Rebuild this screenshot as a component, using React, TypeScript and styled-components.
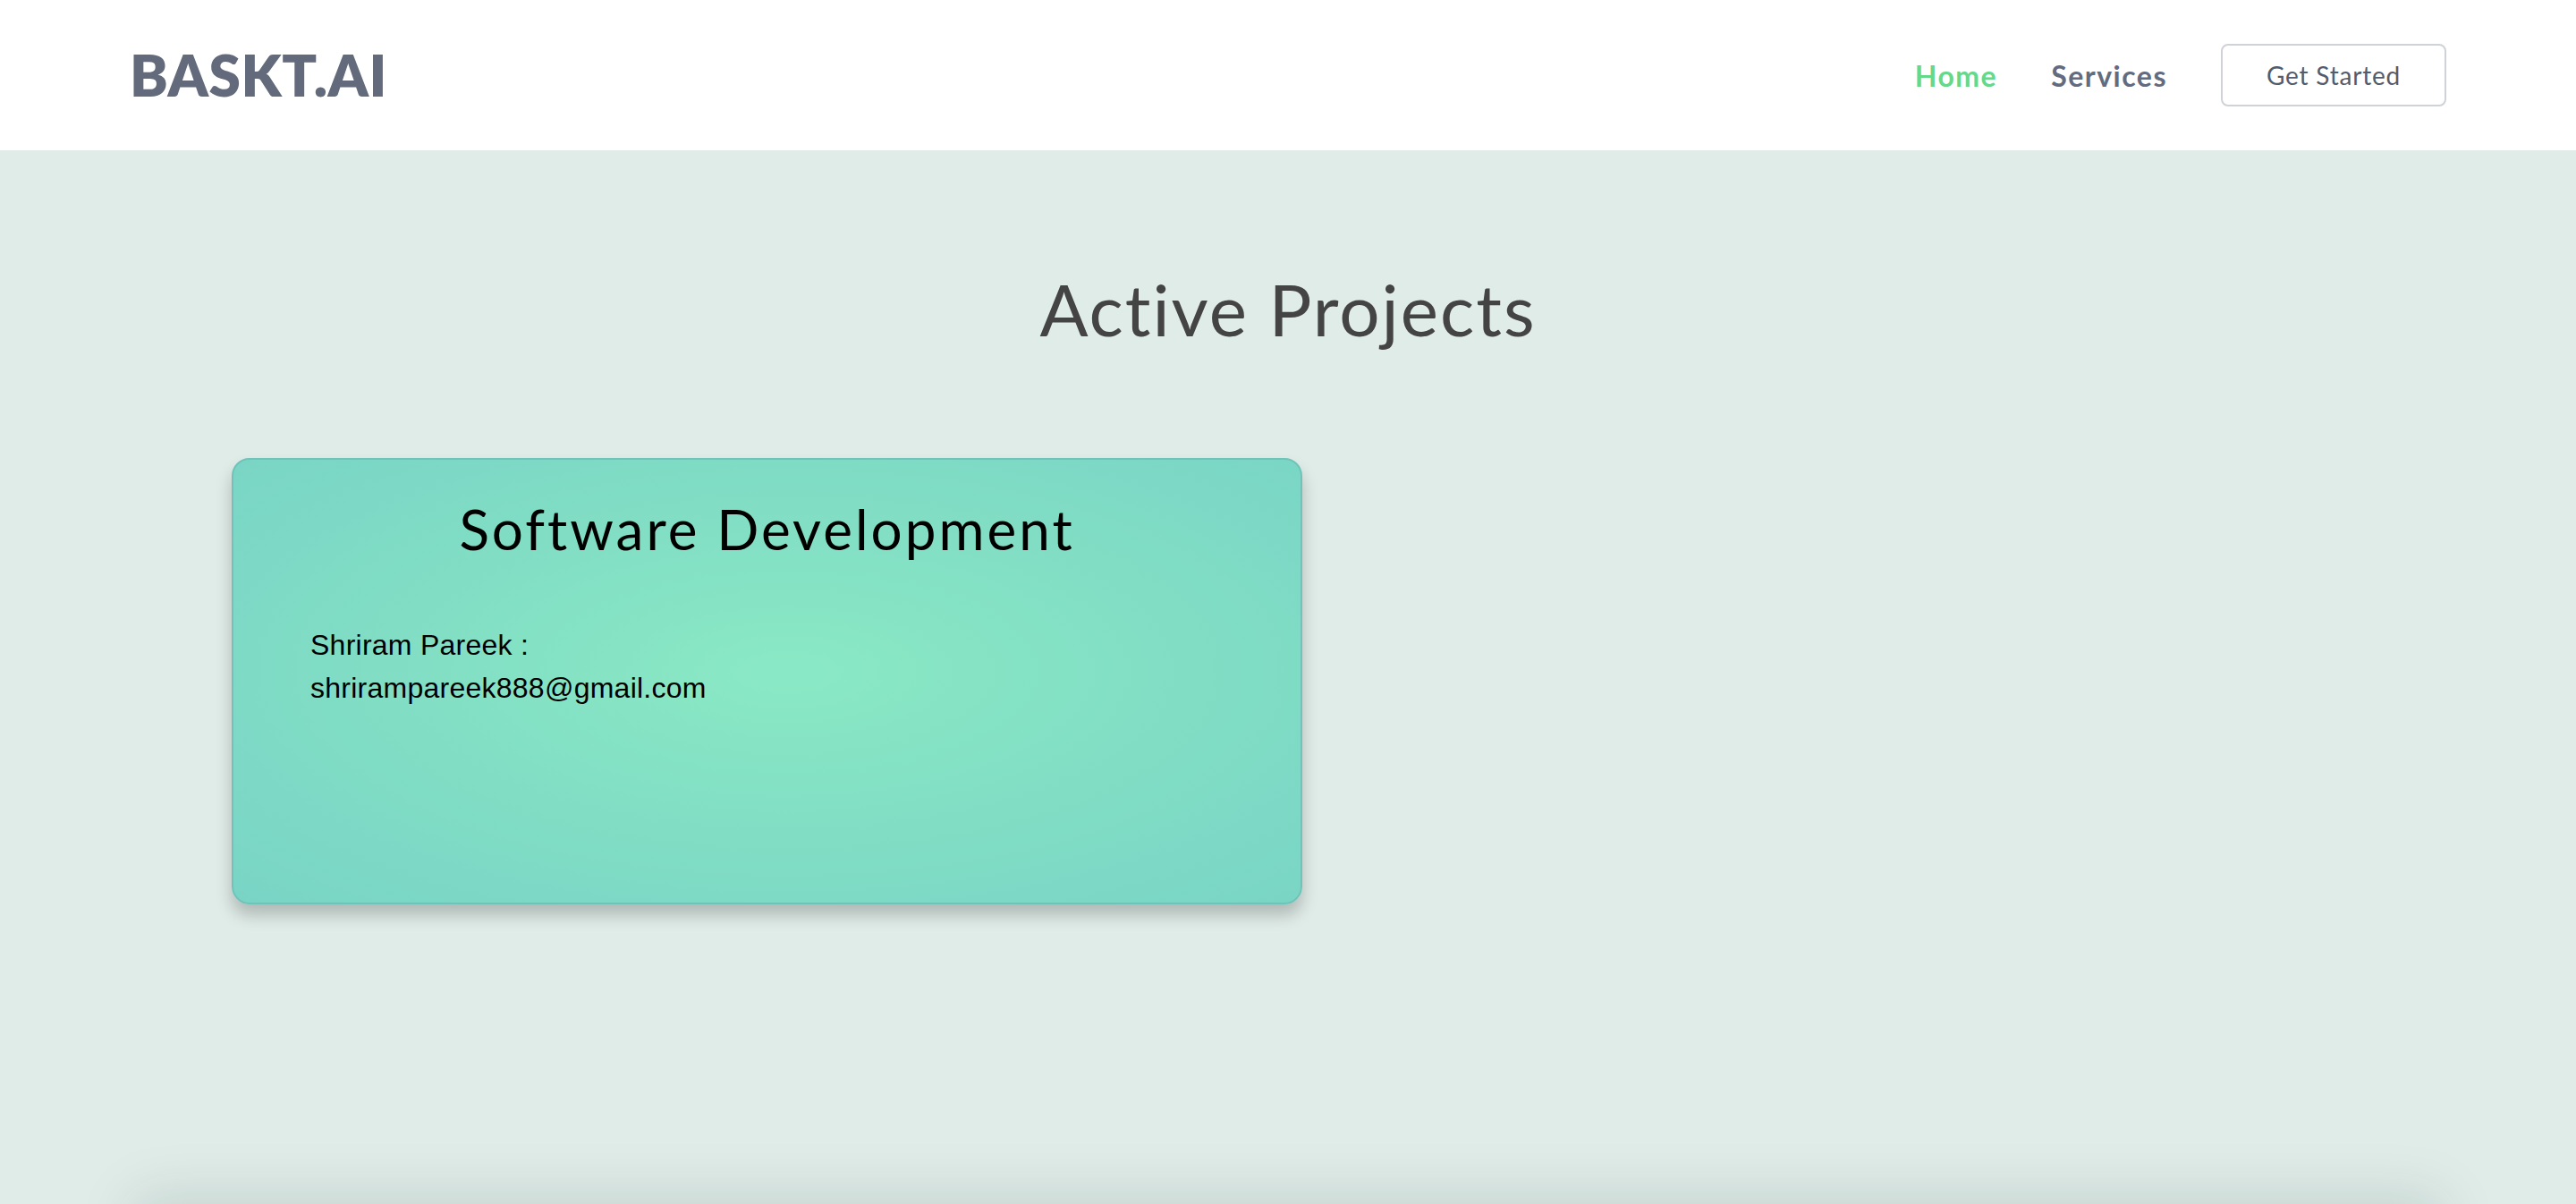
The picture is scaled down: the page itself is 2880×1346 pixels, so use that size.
import React from "react";
import styled, { createGlobalStyle } from "styled-components";

const Global = createGlobalStyle`
  html, body { margin: 0; padding: 0; }
  body { background: #e0ece8; font-family: "Liberation Sans", Arial, sans-serif; overflow: hidden; }
  * { box-sizing: border-box; }
`;

const Header = styled.header`
  height: 168px;
  background: #ffffff;
  display: flex;
  align-items: center;
  justify-content: space-between;
  padding: 0 145px;
  position: relative;
  z-index: 1;
`;

const Logo = styled.div`
  font-family: Lato, "Open Sans", sans-serif;
  font-weight: 800;
  font-size: 64px;
  line-height: 1;
  color: #636a7b;
  letter-spacing: 0.5px;
`;

const Nav = styled.nav`
  display: flex;
  align-items: center;
  gap: 60px;
`;

const NavLink = styled.a<{ $active?: boolean }>`
  font-family: Lato, "Open Sans", sans-serif;
  font-weight: 700;
  font-size: 32px;
  letter-spacing: 1.5px;
  color: ${(p) => (p.$active ? "#64d98a" : "#636b7f")};
  text-decoration: none;
`;

const Button = styled.button`
  width: 252px;
  height: 70px;
  border: 2px solid #cfd3d8;
  border-radius: 8px;
  background: #fff;
  font-family: Lato, "Open Sans", sans-serif;
  font-size: 28px;
  letter-spacing: 0.8px;
  color: #545c6c;
`;

const Main = styled.main`
  height: 1178px;
  padding-top: 129px;
  display: flex;
  flex-direction: column;
  align-items: stretch;
`;

const Title = styled.h1`
  margin: 0;
  text-align: center;
  font-family: Lato, "Open Sans", sans-serif;
  font-weight: 400;
  font-size: 80px;
  letter-spacing: 2px;
  line-height: 1.2;
  color: #444444;
`;

const Grid = styled.section`
  margin-top: 119px;
  padding-left: 259px;
  display: grid;
  grid-template-columns: 1197px;
`;

const Card = styled.article`
  height: 499px;
  border: 2px solid #6fc3b8;
  border-radius: 20px;
  background: radial-gradient(ellipse at 52% 48%, #8ae9c5 0%, #82dfc4 45%, #79d4c6 100%);
  box-shadow: 0 12px 18px rgba(0, 0, 0, 0.22);
  padding: 40px 86px 0;
`;

const CardTitle = styled.h2`
  margin: 0 0 69px;
  text-align: center;
  font-family: Lato, "Open Sans", sans-serif;
  font-weight: 400;
  font-size: 62px;
  letter-spacing: 3px;
  line-height: 1.2;
  color: #000;
`;

const Line = styled.p`
  margin: 0;
  font-family: "Liberation Sans", Arial, sans-serif;
  font-size: 32px;
  letter-spacing: 0.25px;
  line-height: 48px;
  color: #000;
`;

const Footer = styled.footer`
  height: 200px;
  margin: 0 150px;
  background: #e0ece8;
  box-shadow: 0 -8px 60px rgba(0, 40, 30, 0.13);
`;

export default function App() {
  return (
    <>
      <Global />
      <Header>
        <Logo>BASKT.AI</Logo>
        <Nav>
          <NavLink $active href="#">Home</NavLink>
          <NavLink href="#">Services</NavLink>
          <Button>Get Started</Button>
        </Nav>
      </Header>
      <Main>
        <Title>Active Projects</Title>
        <Grid>
          <Card>
            <CardTitle>Software Development</CardTitle>
            <Line>Shriram Pareek :</Line>
            <Line>shrirampareek888@gmail.com</Line>
          </Card>
        </Grid>
      </Main>
      <Footer />
    </>
  );
}
